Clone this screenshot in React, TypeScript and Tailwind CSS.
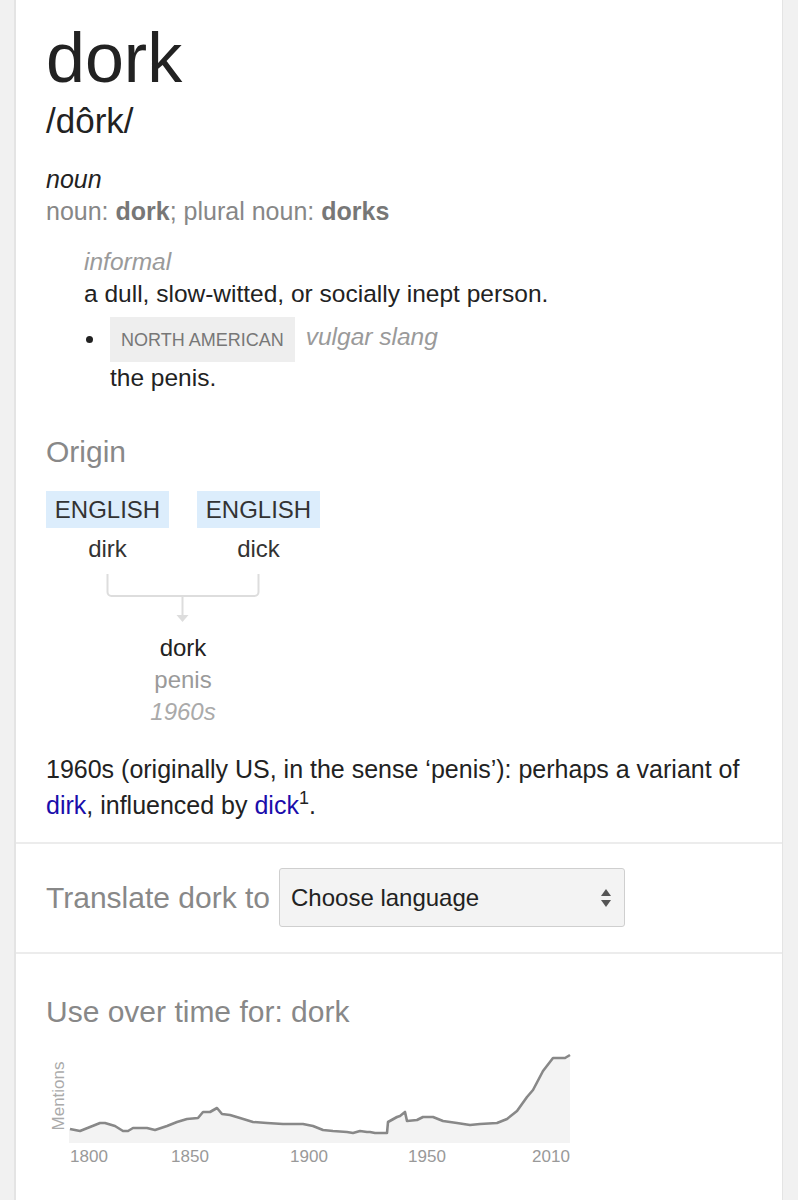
import React from "react";

const linePoints: [number, number][] = [
  [70, 1130], [80, 1132], [90, 1128], [100, 1124], [105, 1124], [115, 1127], [123, 1132],
  [128, 1132], [133, 1129], [147, 1129], [155, 1131], [167, 1127], [177, 1123], [187, 1120],
  [198, 1119], [203, 1113], [210, 1113], [217, 1109], [222, 1115], [230, 1116], [240, 1119],
  [253, 1123], [267, 1124], [283, 1125], [293, 1125], [303, 1125], [313, 1127], [323, 1131],
  [333, 1132], [347, 1133], [353, 1134], [360, 1132], [367, 1133], [370, 1133], [375, 1134],
  [387, 1134], [388, 1123], [397, 1118], [400, 1117], [405, 1113], [407, 1122], [417, 1121],
  [423, 1118], [433, 1118], [443, 1122], [457, 1124], [470, 1126], [480, 1125], [497, 1124],
  [507, 1120], [517, 1112], [527, 1098], [533, 1091], [543, 1072], [553, 1059], [560, 1059],
  [565, 1059], [570, 1056],
];

// chart svg origin: page x=46, y=1040
const OX = 46;
const OY = 1040;

function UsageChart() {
  const pts = linePoints.map(([x, y]) => `${x - OX},${y - OY}`);
  const line = "M" + pts.join(" L");
  const area = `${line} L${570 - OX},${1144 - OY} L${69 - OX},${1144 - OY} L${69 - OX},${1130 - OY} Z`;
  const labels: [string, number][] = [
    ["1800", 89],
    ["1850", 190],
    ["1900", 309],
    ["1950", 427],
    ["2010", 551],
  ];
  return (
    <svg width="540" height="135" viewBox="0 0 540 135" className="block">
      <path d={area} fill="#f3f3f3" />
      <path d={line} fill="none" stroke="#888" strokeWidth="2.6" strokeLinejoin="round" />
      <text
        x="0"
        y="0"
        transform={`translate(${64 - OX},${1097 - OY}) rotate(-90)`}
        textAnchor="middle"
        fontSize="17"
        fill="#aaa"
        fontFamily='"Liberation Sans", Arial, sans-serif'
      >
        Mentions
      </text>
      {labels.map(([t, cx]) => (
        <text
          key={t}
          x={cx - OX}
          y={1163 - OY}
          textAnchor="middle"
          fontSize="17"
          fill="#999"
          fontFamily='"Liberation Sans", Arial, sans-serif'
        >
          {t}
        </text>
      ))}
    </svg>
  );
}

function Connector() {
  // page coords: x from 46, y from 566
  return (
    <svg width="274" height="67" viewBox="0 0 274 67" className="block">
      <path
        d="M61.5 9 V27 a4 4 0 0 0 4 4 H208.5 a4 4 0 0 0 4 -4 V9"
        fill="none"
        stroke="#ddd"
        strokeWidth="2"
      />
      <path d="M136.5 31 V55" fill="none" stroke="#ddd" strokeWidth="2" />
      <path d="M130.5 50 L136.5 57 L142.5 50 Z" fill="#ddd" />
    </svg>
  );
}

export default function App() {
  return (
    <div
      className="min-h-screen bg-[#f1f1f1] pl-[14px] pr-[15px] flex"
      style={{ fontFamily: '"Liberation Sans", Arial, Helvetica, sans-serif' }}
    >
      <div className="flex-1 bg-white border-l-2 border-r border-[#e4e4e4] min-h-screen flex flex-col">
        {/* Definition */}
        <section className="pl-[30px] pt-[18px] pb-[19px]">
          <h1 className="text-[70px] leading-[80px] text-[#222]">dork</h1>
          <div className="mt-[3px] text-[35px] leading-[40px] text-[#222]">/dôrk/</div>

          <div className="mt-[22px] text-[25px] leading-[32px]">
            <div className="italic text-[#222]">noun</div>
            <div className="text-[#878787]">
              noun: <b className="text-[#777]">dork</b>; plural noun: <b className="text-[#777]">dorks</b>
            </div>
          </div>

          <div className="mt-[19px] pl-[38px] text-[24.5px] leading-[32px]">
            <div className="italic text-[#9a9a9a]">informal</div>
            <div className="text-[#222]">a dull, slow-witted, or socially inept person.</div>
            <div className="mt-[7px] flex items-center">
              <span className="w-[26px] flex justify-start pl-[2px]">
                <span className="w-[7px] h-[7px] rounded-full bg-[#222]" />
              </span>
              <span className="h-[45px] px-[11px] flex items-center bg-[#eeeeee] text-[18px] text-[#777]">
                NORTH AMERICAN
              </span>
              <span className="ml-[11px] italic text-[#9a9a9a] -mt-[6px]">vulgar slang</span>
            </div>
            <div className="pl-[26px] text-[#222]">the penis.</div>
          </div>

          {/* Origin */}
          <h2 className="mt-[40px] text-[30px] leading-[36px] text-[#888]">Origin</h2>
          <div className="mt-[21px] w-[274px] text-[24px]">
            <div className="flex gap-[28px]">
              {["dirk", "dick"].map((w) => (
                <div key={w} className="w-[123px] flex flex-col items-center">
                  <div className="w-full h-[37px] leading-[37px] bg-[#dcedfc] text-center text-[#333]">
                    ENGLISH
                  </div>
                  <div className="mt-[5px] leading-[32px] text-[#333]">{w}</div>
                </div>
              ))}
            </div>
            <Connector />
            <div className="flex flex-col items-center leading-[32px]">
              <div className="text-[#222]">dork</div>
              <div className="text-[#9a9a9a]">penis</div>
              <div className="italic text-[#aaa]">1960s</div>
            </div>
          </div>

          <p className="mt-[23px] pr-[20px] text-[25px] leading-[36px] text-[#222]">
            1960s (originally US, in the sense ‘penis’): perhaps a variant of{" "}
            <span className="text-[#1a0dab]">dirk</span>, influenced by{" "}
            <span className="text-[#1a0dab]">dick</span>
            <sup className="text-[18px] -top-[10px]">1</sup>.
          </p>
        </section>

        {/* Translate */}
        <section className="border-t-2 border-[#ececec] pl-[30px] pt-[24px] pb-[25px] flex items-center">
          <span className="text-[30px] leading-[36px] text-[#888]">Translate dork to</span>
          <div className="ml-[9px] w-[346px] h-[59px] bg-[#f3f3f3] border border-[#cfcfcf] rounded-[3px] flex items-center justify-between pl-[11px] pr-[12px]">
            <span className="text-[24px] text-[#222]">Choose language</span>
            <svg width="12" height="24" viewBox="0 0 12 24">
              <path d="M1 10 L6 3 L11 10 Z" fill="#555" />
              <path d="M1 14 L6 21 L11 14 Z" fill="#555" />
            </svg>
          </div>
        </section>

        {/* Use over time */}
        <section className="border-t-2 border-[#ececec] pl-[30px] pt-[40px] flex-1">
          <h2 className="text-[30px] leading-[36px] text-[#888]">Use over time for: dork</h2>
          <div className="mt-[9px]">
            <UsageChart />
          </div>
        </section>
      </div>
    </div>
  );
}
